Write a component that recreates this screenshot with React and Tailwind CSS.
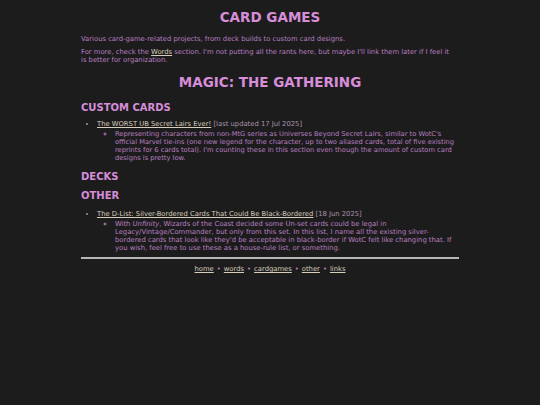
const LINK = 'text-[#d6cdbb] underline';

function Section({ children }) {
  return <h3 className="text-[10px] leading-[12px] font-bold text-[#d68ed9] uppercase">{children}</h3>;
}

export default function App() {
  return (
    <div className="min-h-screen bg-[#1d1c1d] text-[#b77fc0] font-['DejaVu_Sans',sans-serif] text-[6.8px] leading-[8px]">
      <div className="mx-auto w-[378px] pt-[9px] pb-8">
        <h1 className="text-center text-[13.5px] leading-[16px] font-bold text-[#d68ed9]">CARD GAMES</h1>
        <p className="mt-[10px]">Various card-game-related projects, from deck builds to custom card designs.</p>
        <p className="mt-[5px]">
          For more, check the <a className={LINK}>Words</a> section. I'm not putting all the rants here, but maybe I'll
          link them later if I feel it
          <br />
          is better for organization.
        </p>

        <h2 className="mt-[10px] text-center text-[13.5px] leading-[16px] font-bold text-[#d68ed9]">MAGIC: THE GATHERING</h2>

        <div className="mt-[12px]">
          <Section>Custom Cards</Section>
        </div>
        <ul className="mt-[6px] list-disc pl-[16px]">
          <li>
            <a className={LINK}>The WORST UB Secret Lairs Ever!</a>{' '}
            <span className="text-[#a892a8]">[last updated 17 Jul 2025]</span>
            <ul className="mt-[2px] list-[circle] pl-[18px]">
              <li className="text-[6.7px]">
                Representing characters from non-MtG series as Universes Beyond Secret Lairs, similar to WotC's official
                Marvel tie-ins (one new legend for the character, up to two aliased cards, total of five existing reprints
                for 6 cards total). I'm counting these in this section even though the amount of custom card designs is
                pretty low.
              </li>
            </ul>
          </li>
        </ul>

        <div className="mt-[9px]">
          <Section>Decks</Section>
        </div>
        <div className="mt-[7px]">
          <Section>Other</Section>
        </div>
        <ul className="mt-[8px] list-disc pl-[16px]">
          <li>
            <a className={LINK}>The D-List: Silver-Bordered Cards That Could Be Black-Bordered</a>{' '}
            <span className="text-[#a892a8]">[18 Jun 2025]</span>
            <ul className="mt-[2px] list-[circle] pl-[18px]">
              <li>
                With <i>Unfinity</i>, Wizards of the Coast decided some Un-set cards could be legal in
                Legacy/Vintage/Commander, but only from this set. In this list, I name all the existing silver-bordered
                cards that look like they'd be acceptable in black-border if WotC felt like changing that. If you wish,
                feel free to use these as a house-rule list, or something.
              </li>
            </ul>
          </li>
        </ul>

        <hr className="mt-[5px] border-0 h-[2px] bg-[#b9b6b9]" />

        <nav className="mt-[6px] flex justify-center items-center gap-[3px]">
          <a className={LINK}>home</a>
          <span className="text-[#c27bcc]">•</span>
          <a className={LINK}>words</a>
          <span className="text-[#c27bcc]">•</span>
          <a className={LINK}>cardgames</a>
          <span className="text-[#c27bcc]">•</span>
          <a className={LINK}>other</a>
          <span className="text-[#c27bcc]">•</span>
          <a className={LINK}>links</a>
        </nav>
      </div>
    </div>
  );
}
